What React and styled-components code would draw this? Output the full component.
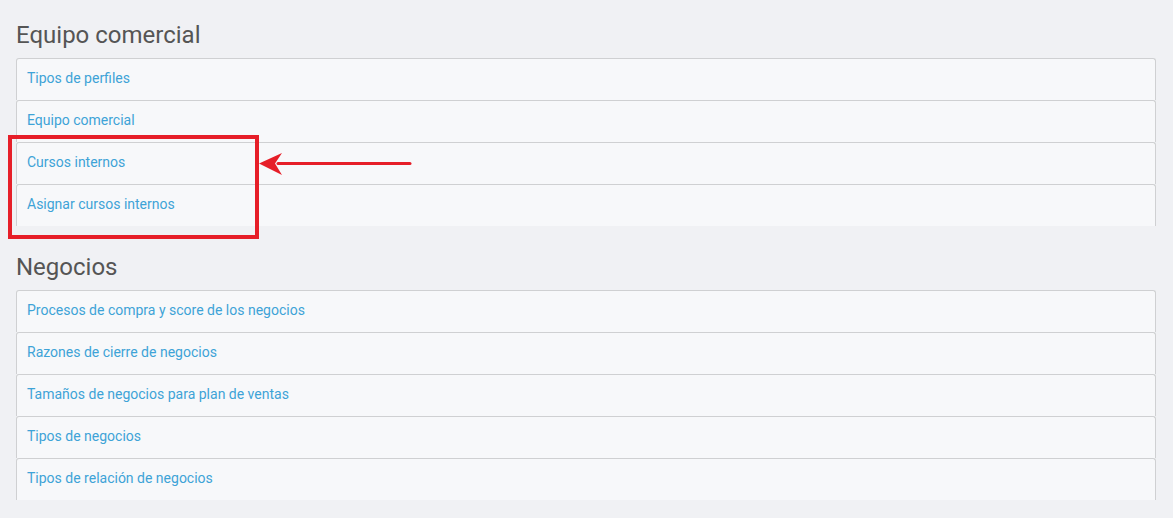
import React from 'react'
import styled, { createGlobalStyle } from 'styled-components'

const GlobalStyle = createGlobalStyle`
  body {
    margin: 0;
    background: #f0f1f4;
    font-family: Roboto, "Liberation Sans", sans-serif;
  }
`

const Page = styled.div`
  position: relative;
  display: flex;
  flex-direction: column;
  padding: 0 17px 20px 16px;
  min-height: 518px;
  box-sizing: border-box;
`

const Section = styled.section`
  margin-bottom: 6px;
`

const Title = styled.h2`
  margin: 18px 0 6px 0;
  font-size: 24px;
  line-height: 34px;
  font-weight: 400;
  color: #555;
`

const List = styled.div`
  display: flex;
  flex-direction: column;
`

const Row = styled.a`
  display: block;
  height: 42px;
  box-sizing: border-box;
  padding: 0 10px;
  line-height: 39px;
  font-size: 14px;
  color: #3ea3d7;
  text-decoration: none;
  background: #f7f8fa;
  border: 1px solid #cfd0d2;
  border-bottom: none;
  border-radius: 3px 3px 0 0;
`

const Highlight = styled.div`
  position: absolute;
  left: 8px;
  top: 135px;
  width: 251px;
  height: 104px;
  box-sizing: border-box;
  border: 4px solid #e61e28;
  pointer-events: none;
`

const Arrow = styled.svg`
  position: absolute;
  left: 258px;
  top: 151px;
  pointer-events: none;
`

const sections = [
  {
    title: 'Equipo comercial',
    items: ['Tipos de perfiles', 'Equipo comercial', 'Cursos internos', 'Asignar cursos internos'],
  },
  {
    title: 'Negocios',
    items: [
      'Procesos de compra y score de los negocios',
      'Razones de cierre de negocios',
      'Tamaños de negocios para plan de ventas',
      'Tipos de negocios',
      'Tipos de relación de negocios',
    ],
  },
]

const App = () => {
  return (
    <Page>
      <GlobalStyle />
      {sections.map((s) => (
        <Section key={s.title}>
          <Title>{s.title}</Title>
          <List>
            {s.items.map((item) => (
              <Row key={item} href="#">{item}</Row>
            ))}
          </List>
        </Section>
      ))}
      <Highlight />
      <Arrow width="156" height="26" viewBox="0 0 156 26">
        <line x1="20" y1="12.5" x2="152" y2="12.5" stroke="#e61e28" strokeWidth="3" strokeLinecap="round" />
        <path d="M1 12.5 L24 2 L17 12.5 L24 24 Z" fill="#e61e28" />
      </Arrow>
    </Page>
  )
}

export default App
